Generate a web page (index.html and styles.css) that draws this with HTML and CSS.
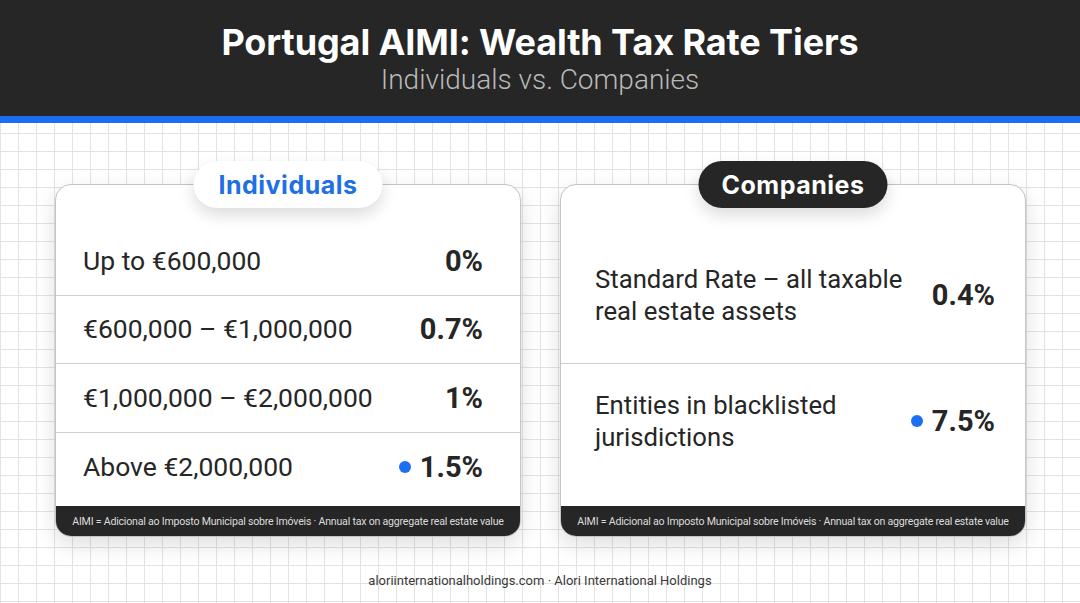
FILE: index.html
```html
<!DOCTYPE html>
<html lang="en">
<head>
<meta charset="utf-8">
<title>Portugal AIMI: Wealth Tax Rate Tiers</title>
<link rel="stylesheet" href="styles.css">
</head>
<body>
  <header class="header">
    <h1 class="title">Portugal AIMI: Wealth Tax Rate Tiers</h1>
    <p class="subtitle">Individuals vs. Companies</p>
  </header>
  <div class="accent"></div>
  <main class="main">
    <div class="cards">
      <section class="card card--left">
        <div class="pill pill--light">Individuals</div>
        <div class="rows">
          <div class="row row--tier">
            <span class="label">Up to €600,000</span>
            <span class="value">0%</span>
          </div>
          <div class="row row--tier">
            <span class="label">€600,000 – €1,000,000</span>
            <span class="value">0.7%</span>
          </div>
          <div class="row row--tier">
            <span class="label">€1,000,000 – €2,000,000</span>
            <span class="value">1%</span>
          </div>
          <div class="row row--tier row--last">
            <span class="label">Above €2,000,000</span>
            <span class="value"><span class="dot"></span>1.5%</span>
          </div>
        </div>
        <div class="note">AIMI = Adicional ao Imposto Municipal sobre Imóveis · Annual tax on aggregate real estate value</div>
      </section>
      <section class="card card--right">
        <div class="pill pill--dark">Companies</div>
        <div class="rows">
          <div class="row row--co row--first">
            <span class="label label--wrap">Standard Rate – all taxable real estate assets</span>
            <span class="value">0.4%</span>
          </div>
          <div class="row row--co row--second">
            <span class="label label--wrap">Entities in blacklisted jurisdictions</span>
            <span class="value"><span class="dot"></span>7.5%</span>
          </div>
        </div>
        <div class="note">AIMI = Adicional ao Imposto Municipal sobre Imóveis · Annual tax on aggregate real estate value</div>
      </section>
    </div>
    <footer class="footer">aloriinternationalholdings.com · Alori International Holdings</footer>
  </main>
</body>
</html>
```

FILE: styles.css
```css
* { box-sizing: border-box; }

html, body {
  margin: 0;
  padding: 0;
}

body {
  width: 1080px;
  height: 603px;
  overflow: hidden;
  background: #ffffff;
  font-family: Roboto, "Noto Sans", sans-serif;
  color: #262626;
}

.header {
  height: 116px;
  background: #262626;
  padding-top: 20px;
  text-align: center;
}

.title {
  margin: 0;
  font-family: Inter, Roboto, sans-serif;
  font-weight: 700;
  font-size: 36px;
  line-height: 44px;
  color: #ffffff;
  letter-spacing: -0.1px;
}

.subtitle {
  margin: 0;
  font-family: Roboto, sans-serif;
  font-weight: 300;
  font-size: 28px;
  line-height: 32px;
  color: #b9b9b9;
}

.accent {
  height: 7px;
  background: #1b6ef3;
}

.main {
  height: 480px;
  padding-top: 61px;
  background-color: #ffffff;
  background-image:
    linear-gradient(#e3e3e3 1px, transparent 1px),
    linear-gradient(90deg, #e3e3e3 1px, transparent 1px);
  background-size: 18px 18px;
  background-position: 0 10px, 0 0;
}

.cards {
  display: flex;
  gap: 39px;
  padding: 0 54px 0 55px;
}

.card {
  position: relative;
  flex: 1;
  height: 353px;
  background: #ffffff;
  border: 1px solid #c4c4c4;
  border-radius: 16px;
  box-shadow: 0 8px 22px rgba(0, 0, 0, 0.13);
  display: flex;
  flex-direction: column;
  padding-top: 42px;
}

.pill {
  position: absolute;
  top: -24px;
  left: 50%;
  transform: translateX(-50%);
  height: 47px;
  width: 189px;
  border-radius: 24px;
  display: flex;
  align-items: center;
  justify-content: center;
  font-family: Inter, Roboto, sans-serif;
  font-weight: 700;
  font-size: 25px;
  letter-spacing: 0.5px;
  box-shadow: 0 7px 16px rgba(0, 0, 0, 0.14);
}

.pill--light {
  background: #ffffff;
  color: #1f6fe5;
}

.pill--dark {
  background: #262626;
  color: #ffffff;
}

.rows {
  flex: 1;
}

.row {
  display: flex;
  align-items: center;
  justify-content: space-between;
  border-bottom: 1px solid #cfcfcf;
}

.row--tier {
  height: 68.5px;
  padding: 0 37px 0 27px;
}

.row--last,
.row--second {
  border-bottom: none;
}

.row--co {
  padding: 0 30px 0 34px;
}

.row--first { height: 137px; }
.row--second { height: 114px; }

.label {
  font-size: 26.5px;
  line-height: 32px;
  color: #262626;
}

.label--wrap {
  font-size: 25.7px;
  max-width: 320px;
}

.value {
  display: flex;
  align-items: center;
  font-weight: 700;
  font-size: 29px;
  color: #262626;
  white-space: nowrap;
}

.dot {
  width: 12px;
  height: 12px;
  border-radius: 50%;
  background: #1d6ff2;
  margin-right: 9px;
}

.note {
  height: 30px;
  flex: none;
  margin-top: auto;
  background: #262626;
  border-radius: 0 0 15px 15px;
  display: flex;
  align-items: center;
  justify-content: center;
  font-size: 10.6px;
  letter-spacing: -0.22px;
  color: #dcdcdc;
  white-space: nowrap;
}

.footer {
  margin-top: 36px;
  text-align: center;
  font-size: 13px;
  line-height: 16px;
  color: #3a3a3a;
}
```
